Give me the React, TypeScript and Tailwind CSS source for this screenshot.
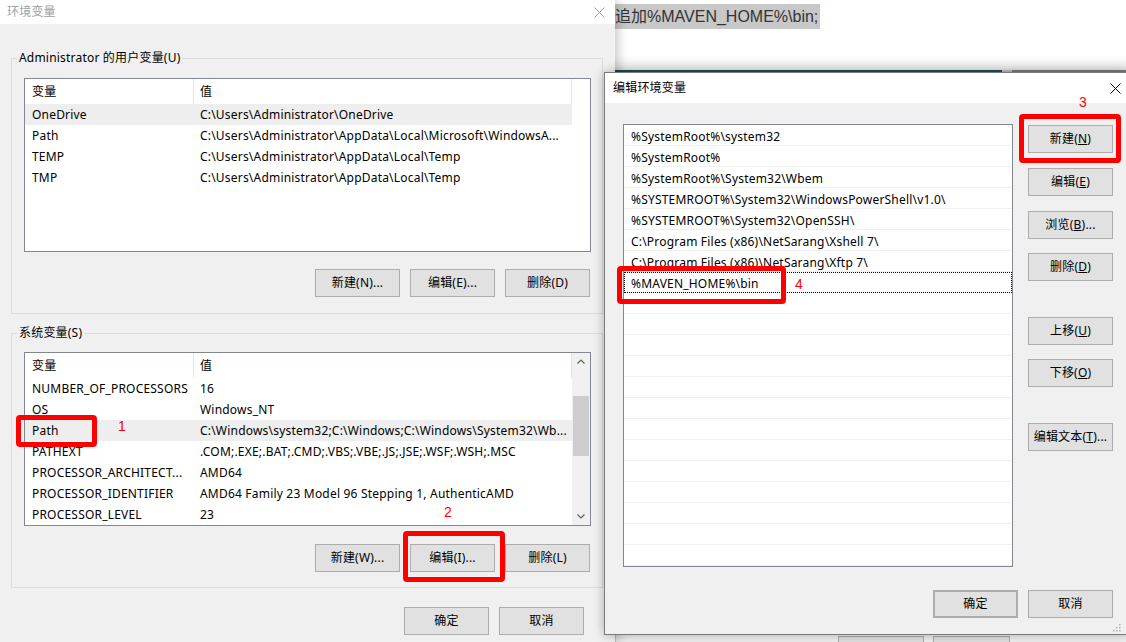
import React from 'react'

const USER_VARS = [
  { name: 'OneDrive', value: 'C:\\Users\\Administrator\\OneDrive', selected: true },
  { name: 'Path', value: 'C:\\Users\\Administrator\\AppData\\Local\\Microsoft\\WindowsA...' },
  { name: 'TEMP', value: 'C:\\Users\\Administrator\\AppData\\Local\\Temp' },
  { name: 'TMP', value: 'C:\\Users\\Administrator\\AppData\\Local\\Temp' }
]

const SYSTEM_VARS = [
  { name: 'NUMBER_OF_PROCESSORS', value: '16' },
  { name: 'OS', value: 'Windows_NT' },
  { name: 'Path', value: 'C:\\Windows\\system32;C:\\Windows;C:\\Windows\\System32\\Wb...', selected: true },
  { name: 'PATHEXT', value: '.COM;.EXE;.BAT;.CMD;.VBS;.VBE;.JS;.JSE;.WSF;.WSH;.MSC' },
  { name: 'PROCESSOR_ARCHITECT...', value: 'AMD64' },
  { name: 'PROCESSOR_IDENTIFIER', value: 'AMD64 Family 23 Model 96 Stepping 1, AuthenticAMD' },
  { name: 'PROCESSOR_LEVEL', value: '23' }
]

const PATH_ENTRIES = [
  '%SystemRoot%\\system32',
  '%SystemRoot%',
  '%SystemRoot%\\System32\\Wbem',
  '%SYSTEMROOT%\\System32\\WindowsPowerShell\\v1.0\\',
  '%SYSTEMROOT%\\System32\\OpenSSH\\',
  'C:\\Program Files (x86)\\NetSarang\\Xshell 7\\',
  'C:\\Program Files (x86)\\NetSarang\\Xftp 7\\',
  '%MAVEN_HOME%\\bin'
]

const CloseX = ({ color }: { color: string }) => (
  <svg width="11" height="11" viewBox="0 0 11 11">
    <path d="M0.5 0.5 L10.5 10.5 M10.5 0.5 L0.5 10.5" stroke={color} strokeWidth="1" fill="none" />
  </svg>
)

const Btn = ({ children, className = '' }: { children: React.ReactNode; className?: string }) => (
  <div className={`h-[28px] w-[85px] flex items-center justify-center bg-[#e1e1e1] border border-[#adadad] text-[12px] text-black ${className}`}>
    {children}
  </div>
)

const Row = ({ name, value, selected }: { name: string; value: string; selected?: boolean }) => (
  <div className={`h-[21px] w-[547px] flex items-center text-[12px] text-black whitespace-nowrap ${selected ? 'bg-[#eeeeee]' : ''}`}>
    <div className="w-[169px] pl-[7px] overflow-hidden">{name}</div>
    <div className="flex-1 pl-[6px] overflow-hidden">{value}</div>
  </div>
)

const Header = () => (
  <div className="h-[25px] w-[547px] flex text-[12px] text-black">
    <div className="w-[169px] pl-[7px] flex items-center border-r border-[#e5e5e5]">变量</div>
    <div className="flex-1 pl-[6px] flex items-center border-r border-[#e5e5e5]">值</div>
  </div>
)

const Chevron = ({ up }: { up?: boolean }) => (
  <svg width="8" height="5" viewBox="0 0 8 5">
    <path d={up ? 'M0.5 4.5 L4 1 L7.5 4.5' : 'M0.5 0.5 L4 4 L7.5 0.5'} stroke="#606060" strokeWidth="1.2" fill="none" />
  </svg>
)

export default function App() {
  return (
    <div className="relative w-[1126px] h-[642px] overflow-hidden bg-white tracking-[0.2px] font-['Noto_Sans','Noto_Sans_CJK_SC',sans-serif]">
      {/* background document window */}
      <div className="absolute left-[615px] top-0 right-0 h-[72px] flex flex-col bg-white">
        <div className="mt-[4px] flex">
          <span className="bg-[#c8c8c8] h-[25px] leading-[25px] pr-[2px] tracking-normal text-[16px] text-[#333333] font-['Liberation_Sans','Noto_Sans_CJK_SC',sans-serif]">
            追加%MAVEN_HOME%\bin;
          </span>
        </div>
        <div className="flex-1" />
        <div className="h-[14px] bg-linear-to-b from-white to-[#e4e4e4]" />
        <div className="h-[2px] flex">
          <div className="w-[387px] bg-[#1e4b55]" />
          <div className="w-[10px] bg-[#bdbdbd]" />
          <div className="flex-1 bg-[#7a7a7a]" />
        </div>
      </div>
      <div className="absolute left-[615px] top-[72px] right-0 bottom-0 bg-[#f0f0f0] border-l border-[#c8c8c8]">
        <div className="mt-[564px] ml-[222px] flex gap-[9px]">
          <div className="w-[86px] h-[10px] border border-[#adadad] bg-[#e1e1e1]" />
          <div className="w-[77px] h-[10px] border border-[#adadad] bg-[#e1e1e1]" />
        </div>
      </div>

      {/* 环境变量 dialog */}
      <div className="absolute left-0 top-0 w-[615px] h-[642px] bg-[#f0f0f0] flex flex-col shadow-[3px_0_10px_rgba(0,0,0,0.22)]">
        <div className="h-[24px] shrink-0 bg-white flex items-center justify-between pl-[7px] pr-[10px]">
          <span className="text-[12px] text-[#a0a0a0]">环境变量</span>
          <CloseX color="#a0a0a0" />
        </div>

        <fieldset className="ml-[11px] mt-[26px] w-[592px] border border-[#dcdcdc] px-[5px] pb-[16px]">
          <legend className="px-[2px] text-[12px] leading-[16px] text-black">Administrator 的用户变量(U)</legend>
          <div className="pl-[7px] pr-[5px] mt-[12px]">
            <div className="w-[567px] h-[174px] border border-[#828790] bg-white">
              <Header />
              {USER_VARS.map((v) => (
                <Row key={v.name} {...v} />
              ))}
            </div>
            <div className="mt-[17px] mr-[2px] flex justify-end gap-[10px]">
              <Btn>新建(N)...</Btn>
              <Btn>编辑(E)...</Btn>
              <Btn>删除(D)</Btn>
            </div>
          </div>
        </fieldset>

        <fieldset className="ml-[11px] mt-[11px] w-[592px] border border-[#dcdcdc] px-[5px] pb-[15px]">
          <legend className="px-[2px] text-[12px] leading-[16px] text-black">系统变量(S)</legend>
          <div className="pl-[7px] pr-[5px] mt-[11px]">
            <div className="w-[567px] h-[174px] border border-[#828790] bg-white flex">
              <div className="w-[547px]">
                <Header />
                {SYSTEM_VARS.map((v) => (
                  <Row key={v.name} {...v} />
                ))}
              </div>
              <div className="w-[18px] bg-[#f0f0f0] flex flex-col">
                <div className="h-[17px] flex items-center justify-center"><Chevron up /></div>
                <div className="flex-1">
                  <div className="mt-[26px] h-[60px] mx-[1px] bg-[#cdcdcd]" />
                </div>
                <div className="h-[17px] flex items-center justify-center"><Chevron /></div>
              </div>
            </div>
            <div className="mt-[18px] mr-[2px] flex justify-end gap-[10px]">
              <Btn>新建(W)...</Btn>
              <Btn>编辑(I)...</Btn>
              <Btn>删除(L)</Btn>
            </div>
          </div>
        </fieldset>

        <div className="mt-[19px] pr-[31px] flex justify-end gap-[10px]">
          <Btn>确定</Btn>
          <Btn>取消</Btn>
        </div>
      </div>

      {/* 编辑环境变量 dialog */}
      <div className="absolute left-[604px] top-[72px] w-[524px] h-[563px] bg-[#f0f0f0] border border-[#7a7a7a] flex flex-col shadow-[0_0_10px_rgba(0,0,0,0.3)]">
        <div className="h-[30px] shrink-0 bg-white flex items-center justify-between pl-[8px] pr-[6px]">
          <span className="text-[12px] text-black">编辑环境变量</span>
          <CloseX color="#000000" />
        </div>
        <div className="pl-[18px] pt-[21px] flex">
          <div className="w-[390px] h-[443px] border border-[#828790] bg-white">
            {Array.from({ length: 21 }).map((_, i) => (
              <div
                key={i}
                className={`h-[21px] border-b border-[#f0f0f0] pl-[7px] pt-[3px] flex items-center text-[12px] text-black whitespace-nowrap ${i === 7 ? 'outline-1 outline-dotted outline-black -outline-offset-1' : ''}`}
              >
                {PATH_ENTRIES[i] ?? ''}
              </div>
            ))}
          </div>
          <div className="ml-[15px] flex flex-col">
            <Btn className="mt-[1px]">新建(<span className="underline">N</span>)</Btn>
            <Btn className="mt-[15px]">编辑(<span className="underline">E</span>)</Btn>
            <Btn className="mt-[15px]">浏览(<span className="underline">B</span>)...</Btn>
            <Btn className="mt-[14px]">删除(<span className="underline">D</span>)</Btn>
            <Btn className="mt-[36px]">上移(<span className="underline">U</span>)</Btn>
            <Btn className="mt-[14px]">下移(<span className="underline">O</span>)</Btn>
            <Btn className="mt-[36px]">编辑文本(<span className="underline">T</span>)...</Btn>
          </div>
        </div>
        <div className="w-[508px] mt-[23px] flex justify-end gap-[10px]">
          <Btn className="border-2 border-[#0078d7]">确定</Btn>
          <Btn>取消</Btn>
        </div>
        <div className="flex-1" />
        <div className="w-[516px] pb-[2px] flex justify-end">
          <svg width="8" height="8" viewBox="0 0 8 8">
            <rect x="6" y="0" width="1.5" height="1.5" fill="#b0b0b0" />
            <rect x="3" y="3" width="1.5" height="1.5" fill="#b0b0b0" />
            <rect x="6" y="3" width="1.5" height="1.5" fill="#b0b0b0" />
            <rect x="0" y="6" width="1.5" height="1.5" fill="#b0b0b0" />
            <rect x="3" y="6" width="1.5" height="1.5" fill="#b0b0b0" />
            <rect x="6" y="6" width="1.5" height="1.5" fill="#b0b0b0" />
          </svg>
        </div>
      </div>

      {/* red annotations */}
      <div className="absolute left-[16px] top-[415px] w-[81px] h-[32px] border-[5px] border-[#ff0000] rounded-[4px]" />
      <div className="absolute left-[403px] top-[531px] w-[102px] h-[51px] border-[5px] border-[#ff0000] rounded-[4px]" />
      <div className="absolute left-[1019px] top-[114px] w-[102px] h-[49px] border-[5px] border-[#ff0000] rounded-[4px]" />
      <div className="absolute left-[617px] top-[266px] w-[169px] h-[38px] border-[5px] border-[#ff0000] rounded-[4px]" />
      <span className="absolute left-[118px] top-[418px] text-[14px] leading-[16px] text-[#ff0000] font-['Liberation_Sans',sans-serif]">1</span>
      <span className="absolute left-[444px] top-[504px] text-[14px] leading-[16px] text-[#ff0000] font-['Liberation_Sans',sans-serif]">2</span>
      <span className="absolute left-[1079px] top-[94px] text-[14px] leading-[16px] text-[#ff0000] font-['Liberation_Sans',sans-serif]">3</span>
      <span className="absolute left-[795px] top-[276px] text-[14px] leading-[16px] text-[#ff0000] font-['Liberation_Sans',sans-serif]">4</span>
    </div>
  )
}
